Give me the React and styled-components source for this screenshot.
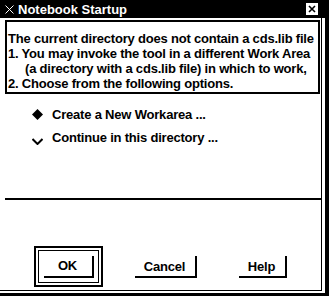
import React from 'react';
import styled, { createGlobalStyle } from 'styled-components';

const GlobalStyle = createGlobalStyle`
  html, body {
    margin: 0;
    padding: 0;
    background: #fff;
  }
`;

const Window = styled.div`
  width: 329px;
  height: 296px;
  background: #fff;
  display: flex;
  flex-direction: column;
  font-family: "Liberation Sans", Arial, sans-serif;
  font-weight: bold;
  font-size: 13px;
  letter-spacing: -0.2px;
  color: #000;
  overflow: hidden;
`;

const TitleBar = styled.div`
  height: 18px;
  flex: none;
  background: #000;
  color: #fff;
  display: flex;
  align-items: center;
  padding: 0 11px 0 5px;
`;

const TitleText = styled.span`
  margin-left: 4px;
  font-size: 13px;
  letter-spacing: 0;
`;

const CloseBox = styled.div`
  margin-left: auto;
  width: 12px;
  height: 12px;
  background: #fff;
  display: flex;
  align-items: center;
  justify-content: center;
`;

const Frame = styled.div`
  flex: 1;
  display: flex;
  border-right: 4px solid #000;
  border-bottom: 3px solid #000;
  padding: 0 3px 2px 0;
`;

const Inner = styled.div`
  flex: 1;
  display: flex;
  flex-direction: column;
  border-right: 1px solid #000;
  border-bottom: 1px solid #000;
`;

const MessageBox = styled.div`
  margin: 2px 1px 0 5px;
  border: 2px solid #000;
  padding: 9px 0 1px 1px;
`;

const Line = styled.div`
  line-height: 15px;
  white-space: pre;
  padding-left: ${p => (p.indent ? '17px' : '0')};
`;

const Options = styled.div`
  margin: 12px 0 0 31px;
  display: flex;
  flex-direction: column;
  gap: 7px;
`;

const OptionRow = styled.div`
  display: flex;
  align-items: center;
  height: 16px;
`;

const IconSlot = styled.span`
  width: 12px;
  height: 16px;
  display: flex;
  align-items: ${p => (p.low ? 'flex-end' : 'center')};
  justify-content: center;
  margin-right: 9px;
`;

const Separator = styled.div`
  margin: auto 0 0 5px;
  height: 2px;
  background: #000;
`;

const ButtonRow = styled.div`
  height: 90px;
  display: grid;
  grid-template-columns: repeat(3, 97px);
  padding-left: 20px;
  align-items: start;
  box-sizing: border-box;
  padding-top: 46px;
`;

const Cell = styled.div`
  display: flex;
  justify-content: center;
  padding-top: ${p => (p.plain ? '10px' : '0')};
`;

const DefaultFrame = styled.div`
  width: 61px;
  height: 33px;
  border: 2px solid #000;
  padding: 2px;
  display: flex;
`;

const DefaultInner = styled.div`
  flex: 1;
  border: 1px solid #000;
  display: flex;
  align-items: center;
  justify-content: center;
`;

const Button = styled.div`
  width: ${p => p.width}px;
  height: 20px;
  border-right: 2px solid #000;
  border-bottom: 2px solid #000;
  display: flex;
  align-items: center;
  justify-content: center;
`;

const TitleIcon = () => (
  <svg width="9" height="9" viewBox="0 0 9 9">
    <path d="M0.5 0.5 L8.5 8.5 M8.5 0.5 L0.5 8.5" stroke="#fff" strokeWidth="1" fill="none" />
  </svg>
);

const CloseIcon = () => (
  <svg width="8" height="8" viewBox="0 0 8 8">
    <path d="M1 1 L7 7 M7 1 L1 7" stroke="#000" strokeWidth="1.6" fill="none" />
  </svg>
);

const Diamond = () => (
  <svg width="11" height="11" viewBox="0 0 11 11">
    <polygon points="5.5,0 11,5.5 5.5,11 0,5.5" fill="#000" />
  </svg>
);

const Chevron = () => (
  <svg width="11" height="7" viewBox="0 0 11 7">
    <path d="M0.5 1 L5.5 6 L10.5 1" stroke="#000" strokeWidth="2" fill="none" />
  </svg>
);

export default function App() {
  return (
    <>
      <GlobalStyle />
      <Window>
        <TitleBar>
          <TitleIcon />
          <TitleText>Notebook Startup</TitleText>
          <CloseBox><CloseIcon /></CloseBox>
        </TitleBar>
        <Frame>
          <Inner>
            <MessageBox>
              <Line>The current directory does not contain a cds.lib file</Line>
              <Line>1. You may invoke the tool in a different Work Area</Line>
              <Line indent>(a directory with a cds.lib file) in which to work,</Line>
              <Line>2. Choose from the following options.</Line>
            </MessageBox>
            <Options>
              <OptionRow>
                <IconSlot><Diamond /></IconSlot>
                Create a New Workarea ...
              </OptionRow>
              <OptionRow>
                <IconSlot low><Chevron /></IconSlot>
                Continue in this directory ...
              </OptionRow>
            </Options>
            <Separator />
            <ButtonRow>
              <Cell>
                <DefaultFrame>
                  <DefaultInner>
                    <Button width={48}>OK</Button>
                  </DefaultInner>
                </DefaultFrame>
              </Cell>
              <Cell plain>
                <Button width={60}>Cancel</Button>
              </Cell>
              <Cell plain>
                <Button width={46}>Help</Button>
              </Cell>
            </ButtonRow>
          </Inner>
        </Frame>
      </Window>
    </>
  );
}
